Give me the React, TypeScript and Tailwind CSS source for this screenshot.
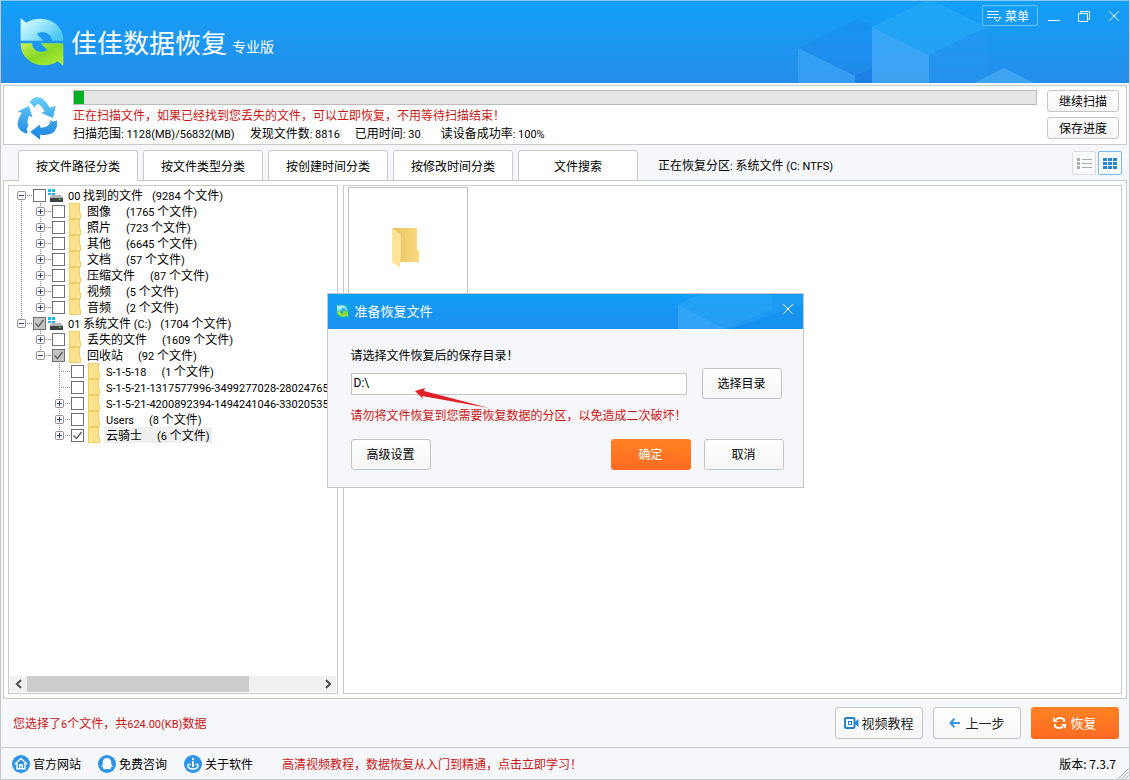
import { useState } from "react";
import type { ReactNode } from "react";
import clsx from "clsx";

type Check = "off" | "on" | "partial";

interface TreeNode {
  level: 0 | 1 | 2;
  name: string;
  count?: string;
  check?: Check;
  expander?: "plus" | "minus";
  // last child of its parent, the vertical guide stops here
  last?: boolean;
  selected?: boolean;
}

const tree: TreeNode[] = [
  { level: 0, name: "00 找到的文件", count: "(9284 个文件)", expander: "minus" },
  { level: 1, name: "图像", count: "(1765 个文件)", expander: "plus" },
  { level: 1, name: "照片", count: "(723 个文件)", expander: "plus" },
  { level: 1, name: "其他", count: "(6645 个文件)", expander: "plus" },
  { level: 1, name: "文档", count: "(57 个文件)", expander: "plus" },
  { level: 1, name: "压缩文件", count: "(87 个文件)", expander: "plus" },
  { level: 1, name: "视频", count: "(5 个文件)", expander: "plus" },
  { level: 1, name: "音频", count: "(2 个文件)", expander: "plus", last: true },
  { level: 0, name: "01 系统文件 (C:)", count: "(1704 个文件)", expander: "minus", check: "partial", last: true },
  { level: 1, name: "丢失的文件", count: "(1609 个文件)", expander: "plus" },
  { level: 1, name: "回收站", count: "(92 个文件)", expander: "minus", check: "partial", last: true },
  { level: 2, name: "S-1-5-18", count: "(1 个文件)" },
  { level: 2, name: "S-1-5-21-1317577996-3499277028-28024765" },
  { level: 2, name: "S-1-5-21-4200892394-1494241046-33020535", expander: "plus" },
  { level: 2, name: "Users", count: "(8 个文件)", expander: "plus" },
  { level: 2, name: "云骑士", count: "(6 个文件)", expander: "plus", check: "on", last: true, selected: true },
];

const tabs = ["按文件路径分类", "按文件类型分类", "按创建时间分类", "按修改时间分类", "文件搜索"];

// Latin runs are set one size smaller than the Chinese around them
function Mixed({ text }: { text: string }) {
  return (
    <>
      {text.split(/([\x20-\x7e]+)/).map((part, i) =>
        i % 2 ? (
          <span key={i} className="font-['Roboto',sans-serif] text-[11px] leading-none whitespace-pre">
            {part}
          </span>
        ) : (
          part
        )
      )}
    </>
  );
}

function PlainButton({ children, className }: { children: ReactNode; className?: string }) {
  return (
    <button
      type="button"
      className={clsx(
        "flex items-center justify-center rounded-[3px] border border-[#c3c5c8] bg-linear-to-b from-white to-[#f6f6f7]",
        className
      )}
    >
      {children}
    </button>
  );
}

function Logo({ className }: { className?: string }) {
  return (
    <svg viewBox="0 0 130 144" className={className} aria-hidden="true">
      <defs>
        <linearGradient id="logoTop" x1="0" y1="0" x2="1" y2="0.6">
          <stop offset="0" stopColor="#e4fbff" />
          <stop offset="0.5" stopColor="#9de8fb" />
          <stop offset="1" stopColor="#4fc8f5" />
        </linearGradient>
        <linearGradient id="logoBottom" x1="0" y1="0" x2="1" y2="1">
          <stop offset="0" stopColor="#c9ef52" />
          <stop offset="0.5" stopColor="#86d926" />
          <stop offset="1" stopColor="#b5f03c" />
        </linearGradient>
      </defs>
      <path
        fill="url(#logoTop)"
        d="M1 1 L18 14 C38 -1 74 -2 98 12 C120 26 129 45 129 68 L95 68 C93 48 76 35 49 47 L69 68 L1 68 Z"
      />
      <path
        fill="url(#logoBottom)"
        d="M129 143 L112 130 C92 145 56 146 32 132 C10 118 1 99 1 76 L35 76 C37 96 54 109 81 97 L61 76 L129 76 Z"
      />
    </svg>
  );
}

function RecycleIcon() {
  return (
    <svg viewBox="18 20 124 132" className="h-[44px] w-[41px]" aria-hidden="true">
      <defs>
        <linearGradient id="recycle" x1="0" y1="20" x2="0" y2="152" gradientUnits="userSpaceOnUse">
          <stop offset="0" stopColor="#6bd0ff" />
          <stop offset="1" stopColor="#1683df" />
        </linearGradient>
      </defs>
      <g fill="url(#recycle)">
        <path d="M56 40 C61 27 72 22 83 23 C99 26 109 40 117 55 L135 50 L127 86 L92 71 L102 65 C97 58 91 50 82 44 C77 44 74 50 71 56 C67 48 62 43 56 40 Z" />
        <path d="M20 66 L54 50 L65 84 L55 79 C50 88 48 99 52 112 C47 116 46 121 50 126 L48 134 C30 128 19 117 20 102 C21 91 26 80 33 71 Z" />
        <path d="M58 128 L88 105 L88 115 C101 116 110 112 115 105 C119 100 120 97 118 92 C124 97 131 98 138 93 C142 107 138 120 129 128 C119 136 103 138 88 137 L88 152 Z" />
      </g>
    </svg>
  );
}

function Cubes() {
  return (
    <svg viewBox="0 0 240 82" className="absolute top-0 right-[91px] h-[82px] w-[240px]" aria-hidden="true">
      <polygon points="0,47 60,18 74,25 74,67 57,75" fill="#1a7de6" opacity="0.25" />
      <polygon points="57,75 74,67 74,82 57,82" fill="#1877e4" opacity="0.6" />
      <polygon points="0,47 57,75 57,82 0,82" fill="#4fb1fa" opacity="0.4" />
      <polygon points="74,26 131,-2 189,26 131,54" fill="#2fb4f4" opacity="0.4" />
      <polygon points="74,26 131,54 131,82 74,82" fill="#5cb8fa" opacity="0.48" />
      <polygon points="131,54 189,26 189,82 131,82" fill="#2b97f2" opacity="0.35" />
      <polygon points="176,82 206,67 236,82" fill="#5cb8fa" opacity="0.5" />
    </svg>
  );
}

function TitleBar() {
  return (
    <header className="relative flex h-[82px] shrink-0 bg-linear-to-b from-[#109ff8] to-[#248eeb] text-white">
      <Cubes />
      <div className="relative flex flex-1 items-center pl-[19px]">
        <Logo className="h-12 w-[44px]" />
        <h1 className="ml-[7px] text-[26px] leading-8 font-normal">佳佳数据恢复</h1>
        <span className="mt-2 ml-[5px] text-sm leading-5">专业版</span>
      </div>
      <div className="relative flex items-start pt-1 pr-2">
        <button
          type="button"
          className="flex h-[21px] w-14 items-center gap-[3px] rounded-[2px] border border-[#6cc4fb] pl-1 text-xs"
        >
          <svg viewBox="0 0 15 13" className="h-[13px] w-[15px]" fill="none" stroke="currentColor" aria-hidden="true">
            <path d="M0 2.500h12M0 5.500h12M0 8.500h6M7 8.500h7l-3.500 4z" />
          </svg>
          菜单
        </button>
        <button type="button" aria-label="最小化" className="mt-1 ml-[9px]">
          <svg viewBox="0 0 14 14" className="size-[14px]" stroke="currentColor" aria-hidden="true">
            <path d="M1 11.500h12" />
          </svg>
        </button>
        <button type="button" aria-label="还原" className="mt-1 ml-4">
          <svg viewBox="0 0 14 14" className="size-[14px]" fill="none" stroke="currentColor" aria-hidden="true">
            <path d="M1.500 4.500h9v8h-9zM3.500 4.500v-2h9v8h-2" />
          </svg>
        </button>
        <button type="button" aria-label="关闭" className="mt-1 ml-4">
          <svg viewBox="0 0 14 14" className="size-[14px]" stroke="currentColor" aria-hidden="true">
            <path d="M2 2l10 10M12 2L2 12" />
          </svg>
        </button>
      </div>
    </header>
  );
}

function ScanStatus() {
  const progress = 1;
  return (
    <section className="mx-[2px] mt-[2px] flex shrink-0 border border-[#c9cacb] bg-white pt-1 pr-[7px] pb-[2px] pl-[13px]">
      <div className="w-14 pt-[6px]">
        <RecycleIcon />
      </div>
      <div className="min-w-0 flex-1">
        <div
          role="progressbar"
          aria-valuenow={progress}
          aria-label="扫描进度"
          className="h-[15px] border border-[#bcbcbc] bg-[#e6e6e6]"
        >
          <div className="h-full bg-[#06b025]" style={{ width: `${progress}%` }} />
        </div>
        <p className="mt-px h-[18px] leading-[18px] text-[#cc1414]">
          正在扫描文件，如果已经找到您丢失的文件，可以立即恢复，不用等待扫描结束！
        </p>
        <p className="flex h-[18px] gap-[15px] leading-[18px]">
          <span><Mixed text="扫描范围: 1128(MB)/56832(MB)" /></span>
          <span><Mixed text="发现文件数: 8816" /></span>
          <span><Mixed text="已用时间: 30" /></span>
          <span className="ml-[5px]"><Mixed text="读设备成功率: 100%" /></span>
        </p>
      </div>
      <div className="ml-[10px] flex flex-col gap-[5px]">
        <PlainButton className="h-[22px] w-[72px]">继续扫描</PlainButton>
        <PlainButton className="h-[22px] w-[72px]">保存进度</PlainButton>
      </div>
    </section>
  );
}

function TabBar() {
  const [active, setActive] = useState(0);
  return (
    <div className="mx-[2px] mt-[5px] flex h-[30px] shrink-0 gap-[5px] pr-[5px] pl-[15px]">
      {tabs.map((tab, i) => (
        <button
          key={tab}
          type="button"
          onClick={() => setActive(i)}
          className={clsx(
            "h-[31px] w-[120px] rounded-t-[3px] border border-[#c9cacb] bg-white",
            active === i && "relative z-10 border-b-white"
          )}
        >
          {tab}
        </button>
      ))}
      <p className="ml-[15px] flex-1 leading-[30px]">
        <Mixed text="正在恢复分区: 系统文件 (C: NTFS)" />
      </p>
      <div className="mt-px flex gap-[2px]">
        <button
          type="button"
          aria-label="列表视图"
          className="flex size-6 items-center justify-center rounded-[2px] border border-[#dcdee0] bg-[#fafbfc]"
        >
          <svg viewBox="0 0 15 11" className="h-[11px] w-[15px]" fill="#a9abae" aria-hidden="true">
            <path d="M0 0h3v3H0zM0 4h3v3H0zM0 8h3v3H0zM5 1h10v1H5zM5 5h10v1H5zM5 9h10v1H5z" />
          </svg>
        </button>
        <button
          type="button"
          aria-label="图标视图"
          className="flex size-6 items-center justify-center rounded-[2px] border border-[#74b9f0] bg-white"
        >
          <svg viewBox="0 0 14 11" className="h-[11px] w-[14px]" fill="#2484d4" aria-hidden="true">
            <path d="M0 0h4v3H0zM5 0h4v3H5zM10 0h4v3h-4zM0 4h4v3H0zM5 4h4v3H5zM10 4h4v3h-4zM0 8h4v3H0zM5 8h4v3H5zM10 8h4v3h-4z" />
          </svg>
        </button>
      </div>
    </div>
  );
}

function DriveIcon() {
  return (
    <svg viewBox="0 0 16 16" className="size-4" aria-hidden="true">
      <path fill="#1fb4e8" d="M0 2h3v3H0zM4 2h3v3H4zM0 6h3v2H0zM4 6h3v2H4z" />
      <path fill="#b4b7ba" d="M4 8h9l2 3H2V9z" />
      <path fill="#3e4245" d="M2 11h13v4H2z" />
      <path fill="#3ee03a" d="M11 12h2v1h-2z" />
    </svg>
  );
}

function SmallFolderIcon() {
  return (
    <svg viewBox="0 0 16 16" className="size-4" aria-hidden="true">
      <path fill="#f0cd68" d="M2 0h11v10h1v6H2z" />
      <path fill="#fce28c" d="M3 1h9v14H3z" />
      <path fill="#fdeeb4" d="M12 11h1v4h-1z" />
    </svg>
  );
}

// dotted guide of an ancestor level that still has siblings below
function Guide({ visible }: { visible: boolean }) {
  return (
    <svg viewBox="0 0 19 16" className="h-4 w-[19px] shrink-0" stroke="#8a8a8a" strokeDasharray="1 1" aria-hidden="true">
      {visible && <path d="M9.500 0v16" />}
    </svg>
  );
}

function Joint({ node, first }: { node: TreeNode; first: boolean }) {
  return (
    <svg viewBox="0 0 21 16" className="h-4 w-[21px] shrink-0" fill="none" aria-hidden="true">
      <g stroke="#8a8a8a" strokeDasharray="1 1">
        {!first && <path d="M9.500 0v8" />}
        {!node.last && <path d="M9.500 8v8" />}
        <path d="M9 8.500h12" />
      </g>
      {node.expander && (
        <>
          <rect x="5.500" y="4.500" width="8" height="8" rx="1" fill="#fafafa" stroke="#919191" />
          <path stroke="#33408c" d={node.expander === "plus" ? "M7 8.500h5M9.500 6v5" : "M7 8.500h5"} />
        </>
      )}
    </svg>
  );
}

function TreeRow({ node, index }: { node: TreeNode; index: number }) {
  const [check, setCheck] = useState<Check>(node.check ?? "off");
  return (
    <li className="flex h-4">
      {node.level > 0 && <Guide visible={index < 8} />}
      {node.level > 1 && <Guide visible={false} />}
      <Joint node={node} first={index === 0} />
      <label className="flex items-center whitespace-nowrap">
        <span className="relative size-[13px] shrink-0">
          <input
            type="checkbox"
            checked={check !== "off"}
            onChange={() => setCheck(check === "off" ? "on" : "off")}
            className={clsx(
              "block size-[13px] appearance-none border border-[#707070]",
              check === "partial" ? "bg-[#c4c4c4]" : "bg-white"
            )}
          />
          {check !== "off" && (
            <svg
              viewBox="0 0 13 13"
              className="pointer-events-none absolute inset-0 size-[13px]"
              fill="none"
              stroke="#5c5c5c"
              strokeWidth="1.300"
              aria-hidden="true"
            >
              <path d="M2.500 6.500l3 3 5-6.500" />
            </svg>
          )}
        </span>
        <span className="mx-[2px] shrink-0">
          {node.level === 0 ? <DriveIcon /> : <SmallFolderIcon />}
        </span>
        <span
          className={clsx(
            "flex h-4 px-[2px] leading-4",
            node.level === 0 ? "gap-[9px]" : "gap-[15px]",
            node.selected && "bg-[#efefef]"
          )}
        >
          <span><Mixed text={node.name} /></span>
          {node.count && <span><Mixed text={node.count} /></span>}
        </span>
      </label>
    </li>
  );
}

function ScrollArrow({ label, d }: { label: string; d: string }) {
  return (
    <button type="button" aria-label={label} className="flex h-4 w-[17px] items-center justify-center">
      <svg viewBox="0 0 8 10" className="h-[10px] w-2" fill="none" stroke="#505050" strokeWidth="2" aria-hidden="true">
        <path d={d} />
      </svg>
    </button>
  );
}

function FileTree() {
  return (
    <div className="flex w-[330px] shrink-0 flex-col border border-[#c9cacb] p-px">
      <ul className="min-h-0 flex-1 overflow-hidden pl-[2px]">
        {tree.map((node, i) => (
          <TreeRow key={node.name} node={node} index={i} />
        ))}
      </ul>
      <div className="flex h-4 items-center bg-[#f0f0f0]">
        <ScrollArrow label="向左滚动" d="M6 1L2 5l4 4" />
        <div className="h-full flex-1">
          <div className="h-full w-[76%] bg-[#cdcdcd]" />
        </div>
        <ScrollArrow label="向右滚动" d="M2 1l4 4-4 4" />
      </div>
    </div>
  );
}

function FileGrid() {
  return (
    <div className="min-w-0 flex-1 border border-[#c9cacb] pt-px pl-1">
      <div className="flex h-40 w-[120px] justify-center border border-[#c0c0c0] pt-[39px]">
        <svg viewBox="0 0 28 42" className="ml-[-4px] h-[42px] w-7" aria-hidden="true">
          <defs>
            <linearGradient id="folderBack" x1="0" y1="0" x2="1" y2="0">
              <stop offset="0.2" stopColor="#ecc763" />
              <stop offset="1" stopColor="#f9db80" />
            </linearGradient>
          </defs>
          <path fill="url(#folderBack)" d="M0 1h25v21l2 2v11H8L0 30z" />
          <path fill="#fde49a" d="M0 1l9 7v23l-1 1v9l-8-6z" />
        </svg>
      </div>
    </div>
  );
}

function ActionBar() {
  return (
    <div className="flex h-12 shrink-0 items-center pr-[10px] pl-3">
      <p className="flex-1 text-[#cc1414]"><Mixed text="您选择了6个文件，共624.00(KB)数据" /></p>
      <div className="flex gap-[10px] text-[13px] text-[#222]">
        <PlainButton className="h-8 w-[88px] gap-[2px]">
          <svg viewBox="0 0 15 12" className="h-3 w-[15px]" fill="none" aria-hidden="true">
            <rect x="1" y="1" width="9.500" height="10" rx="1" stroke="#2484d4" strokeWidth="2" />
            <path fill="#2484d4" d="M4 4h4v4H4zM11 5l3.500-3v8L11 7z" />
            <path fill="#fff" d="M5 5h2v2H5z" />
          </svg>
          视频教程
        </PlainButton>
        <PlainButton className="h-8 w-[88px] gap-[5px]">
          <svg viewBox="0 0 11 10" className="h-[10px] w-[11px]" fill="none" stroke="#3696e4" strokeWidth="2" aria-hidden="true">
            <path d="M5.500 0.700L1.500 5l4 4.300M1.500 5H11" />
          </svg>
          上一步
        </PlainButton>
        <button
          type="button"
          className="flex h-8 w-[88px] items-center justify-center gap-1 rounded-[3px] bg-linear-to-b from-[#ff8222] to-[#ff6a22] text-white"
        >
          <svg viewBox="0 0 13 14" className="h-[14px] w-[13px]" fill="none" stroke="currentColor" strokeWidth="2" aria-hidden="true">
            <path d="M3 3.500C5 1.500 9 1.500 11 3.500V6M10 10.500C8 12.500 4 12.500 2 10.500V8" />
            <path fill="currentColor" stroke="none" d="M0 1v5h5zM13 13V8H8z" />
          </svg>
          恢复
        </button>
      </div>
    </div>
  );
}

function StatusLink({ icon, children }: { icon: ReactNode; children: ReactNode }) {
  return (
    <a href="#" className="mr-[17px] flex items-center gap-[3px]">
      <svg viewBox="0 0 18 18" className="size-[18px]" fill="none" aria-hidden="true">
        <circle cx="9" cy="9" r="9" fill="#2b94e6" />
        {icon}
      </svg>
      {children}
    </a>
  );
}

function StatusBar() {
  return (
    <footer className="flex h-8 shrink-0 items-center border-t border-[#c9cacb] pl-[11px]">
      <StatusLink
        icon={<path stroke="#fff" strokeWidth="1.400" d="M2.800 9.200L9 3.500l6.200 5.700M5 8v5.800h8V8M7.700 13.500V9.800h2.600v3.700" />}
      >
        官方网站
      </StatusLink>
      <StatusLink
        icon={
          <path
            fill="#fff"
            d="M9 3c2.700 0 4.200 1.900 4.200 4.200v1.500l1.600 3-1.500.3-.8 1c.5.800.2 1.300-.7 1.300L9 14l-2.800.3c-.9 0-1.200-.5-.7-1.300l-.8-1-1.500-.3 1.600-3V7.200C4.800 4.900 6.300 3 9 3z"
          />
        }
      >
        免费咨询
      </StatusLink>
      <StatusLink
        icon={
          <>
            <path fill="#fff" d="M8 3h2v2H8zM8 6h2v6H8z" />
            <path stroke="#fff" strokeWidth="1.400" d="M6.500 9.500H4.200c-1 3 1.300 4.500 4.800 4.500s5.800-1.500 4.800-4.500h-2.300" />
          </>
        }
      >
        关于软件
      </StatusLink>
      <a href="#" className="ml-3 flex-1 text-[#cc1414]">
        高清视频教程，数据恢复从入门到精通，点击立即学习！
      </a>
      <span>版本: 7.3.7</span>
      <svg viewBox="0 0 11 11" className="ml-[2px] h-[11px] w-[11px] self-end" stroke="#a8aaac" aria-hidden="true">
        <path d="M0.500 10.500l10-10M4 10.500L10.500 4M7.500 10.500l3-3" />
      </svg>
    </footer>
  );
}

function RecoverDialog() {
  const [path, setPath] = useState("D:\\");
  return (
    <div className="fixed inset-0 z-20 flex items-center justify-center">
      <div
        role="dialog"
        aria-labelledby="recover-title"
        className="relative w-[477px] border border-[#c3c5c8] bg-[#f5f7fa]"
      >
        <div className="relative flex h-[35px] items-center bg-linear-to-b from-[#129df6] to-[#1c90f0] pr-[9px] pl-2 text-white">
          <svg viewBox="0 0 140 35" className="absolute top-0 right-0 h-[35px] w-[140px]" aria-hidden="true">
            <polygon points="15,10 38,0 140,0 140,10 67,35 15,35" fill="#3fb5f8" opacity="0.3" />
            <polygon points="15,11 62,35 15,35" fill="#5cb8fa" opacity="0.25" />
            <polygon points="109,0 140,0 140,35 62,35 109,15" fill="#128df0" opacity="0.3" />
          </svg>
          <span className="relative flex size-[14px] items-center justify-center bg-[#12a5d8]">
            <Logo className="h-3 w-[11px]" />
          </span>
          <h2 id="recover-title" className="relative ml-[5px] flex-1 text-[13px]">准备恢复文件</h2>
          <button type="button" aria-label="关闭对话框" className="relative -mt-1">
            <svg viewBox="0 0 12 12" className="size-3" stroke="currentColor" aria-hidden="true">
              <path d="M1 1l10 10M11 1L1 11" />
            </svg>
          </button>
        </div>
        <form className="pt-4 pr-[19px] pb-[17px] pl-[23px]" onSubmit={(e) => e.preventDefault()}>
          <label htmlFor="save-path" className="block leading-5">请选择文件恢复后的保存目录！</label>
          <div className="mt-[3px] mr-[2px] flex items-center gap-[15px]">
            <input
              id="save-path"
              value={path}
              onChange={(e) => setPath(e.target.value)}
              className="mt-px h-[22px] min-w-0 flex-1 border border-[#c3c5c8] bg-white px-[2px] pb-px font-['Roboto',sans-serif] text-xs"
            />
            <PlainButton className="h-[31px] w-20">选择目录</PlainButton>
          </div>
          <p className="mt-[6px] leading-5 text-[#cc1414]">请勿将文件恢复到您需要恢复数据的分区，以免造成二次破坏！</p>
          <div className="mt-[14px] flex">
            <PlainButton className="h-[31px] w-20">高级设置</PlainButton>
            <button
              type="submit"
              className="mr-[13px] ml-auto h-[31px] w-20 rounded-[3px] bg-linear-to-b from-[#ff8222] to-[#ff6a22] text-white"
            >
              确定
            </button>
            <PlainButton className="h-[31px] w-20">取消</PlainButton>
          </div>
        </form>
        {/* pointer towards the path field */}
        <svg viewBox="0 0 76 22" className="pointer-events-none absolute top-[94px] left-[86px] h-[22px] w-[76px]" aria-hidden="true">
          <path fill="#e01f26" d="M1 3L11 0l-1 3L75 20 8 8l1 3z" />
        </svg>
      </div>
    </div>
  );
}

export default function App() {
  return (
    <div className="flex h-screen min-h-[600px] flex-col border border-[#c3c8cc] border-t-[#8fc9ec] bg-[#f5f7fa] font-['Noto_Sans_CJK_SC',sans-serif] text-xs font-normal text-black">
      <TitleBar />
      <ScanStatus />
      <TabBar />
      <main className="mx-[2px] flex min-h-0 flex-1 gap-[5px] border border-[#c9cacb] bg-white p-1">
        <FileTree />
        <FileGrid />
      </main>
      <ActionBar />
      <StatusBar />
      <RecoverDialog />
    </div>
  );
}
